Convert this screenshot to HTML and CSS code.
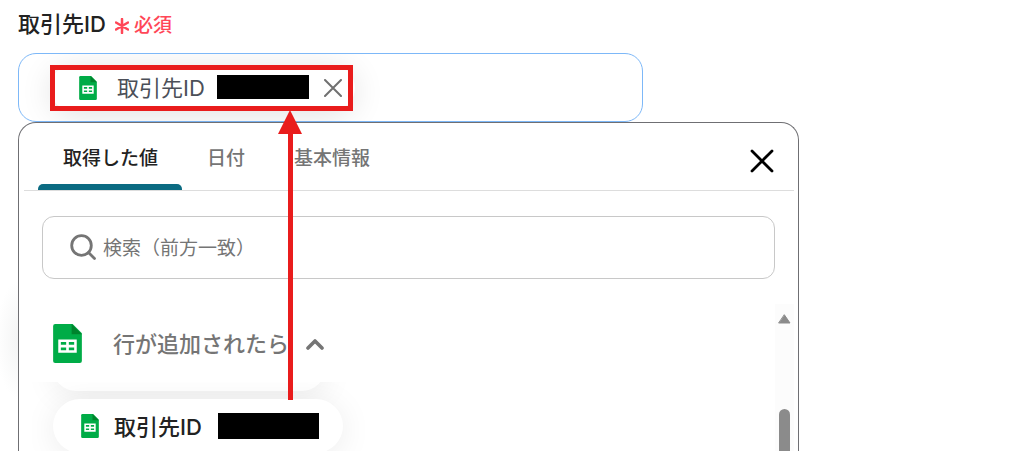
FILE: index.html
```
<!DOCTYPE html>
<html lang="ja">
<head>
<meta charset="utf-8">
<title>取引先ID</title>
<link rel="stylesheet" href="styles.css">
</head>
<body>
<svg class="defs" aria-hidden="true">
  <symbol id="sheet" viewBox="0 0 28 38">
    <path fill="#00ac47" d="M2 0h17l9 9v27a2 2 0 0 1-2 2H2a2 2 0 0 1-2-2V2a2 2 0 0 1 2-2z"/>
    <path fill="#00832d" d="M18 0l10 10h-10z"/>
    <path fill="#fff" fill-rule="evenodd" d="M5 15h18v13H5zM7.500 17.500v2.700h5.200v-2.700zM15.300 17.500v2.700h5.200v-2.700zM7.500 22.800v2.700h5.200v-2.700zM15.300 22.800v2.700h5.200v-2.700z"/>
  </symbol>
</svg>
<main class="field">
  <h1 class="label">取引先ID
    <span class="required"><svg class="star" viewBox="0 0 14 16" aria-hidden="true"><path d="M7 1v14M1 4.500l12 7M13 4.500l-12 7"/></svg>必須</span>
  </h1>
  <div class="value-box">
    <div class="chip">
      <svg class="sheet-small"><use href="#sheet"/></svg>
      <span class="chip-name">取引先ID</span>
      <span class="mask"></span>
      <button class="icon-button" aria-label="削除"><svg class="remove" viewBox="0 0 18 18"><path d="M1 1l16 16M17 1L1 17"/></svg></button>
    </div>
    <div class="callout"></div>
    <svg class="arrow" viewBox="0 0 26 290" aria-hidden="true"><path d="M13 0l12 24H16v266h-5V24H1z"/></svg>
  </div>
  <section class="panel">
    <header class="panel-head">
      <nav class="tabs" role="tablist">
        <button class="tab active" role="tab" aria-selected="true">取得した値</button>
        <button class="tab" role="tab">日付</button>
        <button class="tab" role="tab">基本情報</button>
      </nav>
      <button class="icon-button" aria-label="閉じる"><svg class="close" viewBox="0 0 24 24"><path d="M2 2l20 20M22 2L2 22"/></svg></button>
    </header>
    <label class="search">
      <svg class="glass" viewBox="0 0 26 26" aria-hidden="true"><circle cx="11.500" cy="11.500" r="9.800"/><path d="M18.500 18.500l6 6"/></svg>
      <input type="text" placeholder="検索（前方一致）" aria-label="検索">
    </label>
    <div class="results">
      <div class="list">
        <button class="group">
          <svg class="sheet-large"><use href="#sheet"/></svg>
          <span>行が追加されたら</span>
          <svg class="chevron" viewBox="0 0 18 12"><path d="M2 10l7-7 7 7"/></svg>
        </button>
        <div class="options">
          <div class="option-previous"></div>
          <button class="option">
            <svg class="sheet-small"><use href="#sheet"/></svg>
            <span class="option-name">取引先ID</span>
            <span class="mask mask-wide"></span>
          </button>
        </div>
      </div>
      <div class="scrollbar" aria-hidden="true">
        <svg class="scroll-up" viewBox="0 0 13 10"><path d="M6.500 1L12 9H1z"/></svg>
        <div class="thumb"></div>
      </div>
    </div>
  </section>
</main>
</body>
</html>
```
FILE: styles.css
```
* { box-sizing: border-box; }
html, body { height: 100%; }
body {
  margin: 0;
  overflow: hidden;
  background: #fff;
  color: #222;
  font-family: Inter, "Noto Sans CJK JP", sans-serif;
}
button {
  margin: 0;
  padding: 0;
  border: 0;
  background: none;
  color: inherit;
  font: inherit;
}
svg { display: block; flex: none; }
path, circle { stroke-linecap: round; stroke-linejoin: round; }
.defs { position: absolute; width: 0; height: 0; }
.field {
  display: flex;
  flex-direction: column;
  height: 100%;
  padding: 8px 0 0 18px;
  background: radial-gradient(ellipse 24px 60px at 20px 340px, #f3f4f4, #fff);
}
.label {
  display: flex;
  align-items: center;
  gap: 9px;
  height: 32px;
  margin: 0 0 13px;
  font-size: 22px;
  font-weight: 500;
  line-height: 32px;
}
.required {
  display: flex;
  align-items: center;
  gap: 5px;
  padding-top: 3px;
  color: #ff4757;
  font-size: 19px;
}
.star { width: 14px; height: 16px; fill: none; stroke: currentColor; stroke-width: 2.5; }
.value-box {
  position: relative;
  width: 62.9%;
  max-width: 625px;
  height: 69px;
  padding: 11px 31px;
  border: 1px solid #7db8f8;
  border-radius: 18px;
}
.chip {
  display: flex;
  align-items: center;
  width: 305px;
  height: 46px;
  padding-left: 29px;
  border-radius: 23px;
  background: #fff;
  box-shadow: 0 4px 32px rgba(0, 0, 0, 0.12);
  color: #4b4f58;
  font-size: 22px;
}
.value-box .chip { clip-path: inset(-11px -40px -11px -31px); }
.sheet-small { width: 18px; height: 24px; }
.chip-name { margin: 0 12px 0 20px; padding-bottom: 4px; }
.mask { width: 92px; height: 24px; margin-bottom: 3px; background: #000; }
.icon-button { display: flex; align-items: center; }
.chip .icon-button { margin-left: 15px; }
.remove { width: 18px; height: 18px; fill: none; stroke: #707070; stroke-width: 2; }
.callout {
  position: absolute;
  top: 11px;
  left: 31px;
  width: 303px;
  height: 46px;
  border: 5px solid #e91c1c;
}
.arrow {
  position: absolute;
  z-index: 2;
  top: 56px;
  left: 258px;
  width: 26px;
  height: 290px;
  fill: #e91c1c;
}
.panel {
  display: flex;
  flex: 1;
  flex-direction: column;
  width: 78.7%;
  max-width: 781px;
  min-height: 0;
  padding: 0 4px 0 5px;
  border: 1px solid #6f6f73;
  border-bottom: 0;
  border-radius: 18px 18px 0 0;
  background: #fff;
}
.panel-head {
  display: flex;
  align-items: center;
  justify-content: space-between;
  height: 68px;
  padding: 0 20px 0 14px;
  border-bottom: 1px solid #ddd;
}
.tabs { display: flex; align-self: stretch; }
.tab {
  padding: 6px 24px 0 25px;
  border-bottom: 6px solid transparent;
  color: #757575;
  font-size: 19px;
  font-weight: 500;
}
.active {
  position: relative;
  color: #222;
}
.active::after {
  content: "";
  position: absolute;
  right: 0;
  bottom: -6px;
  left: 0;
  height: 6px;
  border-radius: 5px 5px 0 0;
  background: #0b6b82;
}
.close { width: 24px; height: 24px; margin-top: 8px; fill: none; stroke: #000; stroke-width: 2.8; }
.search {
  display: flex;
  align-items: center;
  gap: 7px;
  height: 63px;
  margin: 25px 19px 0 18px;
  padding: 0 27px 2px;
  border: 1px solid #c8c8c8;
  border-radius: 12px;
}
.glass { width: 26px; height: 26px; fill: none; stroke: #757575; stroke-width: 2.8; }
.search input {
  flex: 1;
  min-width: 0;
  padding: 0;
  border: 0;
  outline: 0;
  background: none;
  font: 19px "Noto Sans CJK JP", sans-serif;
}
.search input::placeholder { color: #757575; opacity: 1; }
.results {
  display: flex;
  flex: 1;
  min-height: 0;
  margin-top: 25px;
}
.list {
  display: flex;
  flex: 1;
  flex-direction: column;
  min-width: 0;
  padding-left: 8px;
}
.group {
  display: flex;
  align-items: center;
  height: 78px;
  padding-left: 21px;
  color: #757575;
  font-size: 22px;
  font-weight: 500;
}
.group span { margin: 0 17px 0 31px; padding-bottom: 3px; }
.sheet-large { width: 29px; height: 39px; }
.chevron { width: 18px; height: 12px; margin-top: 2px; fill: none; stroke: #757575; stroke-width: 3.6; }
.options {
  flex: 1;
  min-height: 0;
  padding-left: 21px;
  overflow: hidden;
}
.option-previous {
  width: 272px;
  height: 46px;
  margin-top: -37px;
  border-radius: 23px;
  background: #fff;
  box-shadow: 0 4px 32px rgba(0, 0, 0, 0.08);
}
.option {
  position: relative;
  display: flex;
  align-items: center;
  width: 290px;
  height: 54px;
  margin-top: 8px;
  padding-left: 28px;
  border-radius: 27px;
  background: #fff;
  box-shadow: 0 4px 32px rgba(0, 0, 0, 0.08);
  color: #222;
  font-size: 22px;
  font-weight: 500;
}
.option-name { margin: 0 16px 0 15px; padding-bottom: 3px; }
.mask-wide { width: 101px; height: 26px; margin-bottom: 0; }
.scrollbar {
  display: flex;
  flex-direction: column;
  align-items: center;
  width: 19px;
  background: #fcfcfc;
}
.scroll-up { width: 13px; height: 10px; margin-top: 10px; fill: #8b8b8b; stroke: #8b8b8b; }
.thumb { flex: 1; width: 11px; margin-top: 85px; border-radius: 6px 6px 0 0; background: #8b8b8b; }
```
